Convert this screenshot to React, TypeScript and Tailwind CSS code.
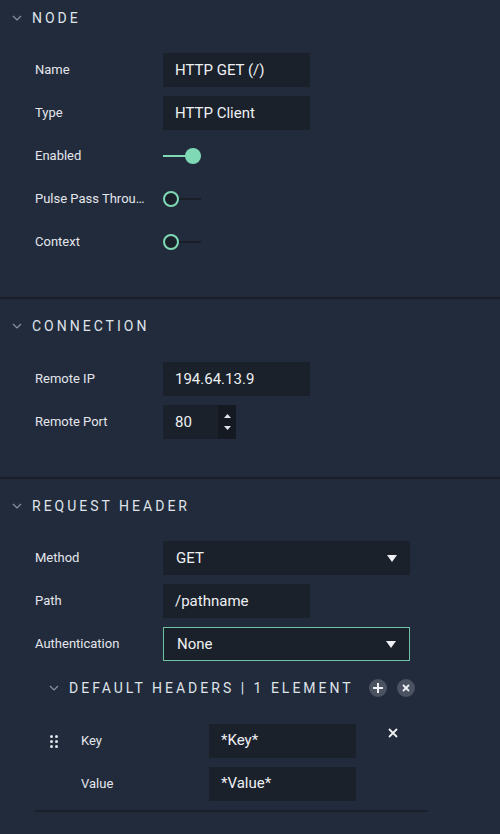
import React from "react";

const FONT = { fontFamily: "Roboto, 'Noto Sans', sans-serif" };

const Chevron = ({ className = "" }: { className?: string }) => (
  <svg width="10" height="6" viewBox="0 0 10 6" className={className}>
    <path d="M1 1l4 4 4-4" fill="none" stroke="#8a93a3" strokeWidth="1.2" />
  </svg>
);

const SectionTitle = ({ title }: { title: string }) => (
  <div className="flex items-center h-[34px] pl-[12px]">
    <Chevron />
    <span className="ml-[10px] text-[14px] tracking-[3px] text-[#dfe3ea]">{title}</span>
  </div>
);

const Row = ({ label, children }: { label: string; children: React.ReactNode }) => (
  <div className="flex items-center h-[34px]">
    <div className="w-[163px] pl-[35px] pr-[17px] text-[13px] text-[#e3e6ec] truncate shrink-0">{label}</div>
    {children}
  </div>
);

const TextBox = ({ value, w = "w-[147px]" }: { value: string; w?: string }) => (
  <div className={`${w} h-[34px] bg-[#1b212b] flex items-center px-[12px] text-[15px] text-[#eef0f3]`}>{value}</div>
);

const Toggle = ({ on }: { on: boolean }) => (
  <div className="relative w-[38px] h-[18px] flex items-center">
    <div className={`w-full h-[2px] ${on ? "bg-[#7fd9b4]" : "bg-[#191e27]"}`} />
    {on ? (
      <div className="absolute right-0 w-[16px] h-[16px] rounded-full bg-[#7fd9b4]" />
    ) : (
      <div className="absolute left-0 w-[16px] h-[16px] rounded-full border-2 border-[#7fd9b4] bg-[#1b212b]" />
    )}
  </div>
);

const Select = ({ value, active }: { value: string; active?: boolean }) => (
  <div
    className={`w-[247px] h-[34px] bg-[#1b212b] flex items-center justify-between pl-[13px] pr-[13px] text-[15px] text-[#eef0f3] ${
      active ? "border border-[#6fc3a4]" : ""
    }`}
  >
    <span>{value}</span>
    <svg width="10" height="7" viewBox="0 0 10 7">
      <path d="M0 0h10L5 7z" fill="#eef0f3" />
    </svg>
  </div>
);

const Divider = () => <div className="h-[2px] bg-[#1a1f29]" />;

export default function App() {
  return (
    <div style={FONT} className="w-[500px] h-[834px] bg-[#222b3b] overflow-hidden">
      <div className="pt-[1px]">
        <SectionTitle title="NODE" />
        <div className="mt-[18px] flex flex-col gap-[9px]">
          <Row label="Name">
            <TextBox value="HTTP GET (/)" />
          </Row>
          <Row label="Type">
            <TextBox value="HTTP Client" />
          </Row>
          <Row label="Enabled">
            <Toggle on />
          </Row>
          <Row label="Pulse Pass Through">
            <Toggle on={false} />
          </Row>
          <Row label="Context">
            <Toggle on={false} />
          </Row>
        </div>
        <div className="h-[38px]" />
        <Divider />
      </div>

      <div className="pt-[10px]">
        <SectionTitle title="CONNECTION" />
        <div className="mt-[19px] flex flex-col gap-[9px]">
          <Row label="Remote IP">
            <TextBox value="194.64.13.9" />
          </Row>
          <Row label="Remote Port">
            <div className="flex h-[34px] w-[73px] bg-[#1b212b]">
              <div className="flex-1 flex items-center px-[12px] text-[15px] text-[#eef0f3]">80</div>
              <div className="w-[18px] bg-[#151a22] flex flex-col items-center justify-center gap-[8px]">
                <svg width="7" height="4" viewBox="0 0 7 4">
                  <path d="M0 4L3.5 0 7 4z" fill="#dfe3ea" />
                </svg>
                <svg width="7" height="4" viewBox="0 0 7 4">
                  <path d="M0 0h7L3.5 4z" fill="#dfe3ea" />
                </svg>
              </div>
            </div>
          </Row>
        </div>
        <div className="h-[38px]" />
        <Divider />
      </div>

      <div className="pt-[10px]">
        <SectionTitle title="REQUEST HEADER" />
        <div className="mt-[18px] flex flex-col gap-[9px]">
          <Row label="Method">
            <Select value="GET" />
          </Row>
          <Row label="Path">
            <TextBox value="/pathname" />
          </Row>
          <Row label="Authentication">
            <Select value="None" active />
          </Row>
        </div>

        <div className="mt-[10px] flex items-center h-[34px] pl-[49px]">
          <Chevron />
          <span className="ml-[10px] text-[14px] tracking-[3px] text-[#dfe3ea]">DEFAULT HEADERS | 1 ELEMENT</span>
          <div className="ml-[15px] flex gap-[10px]">
            <div className="w-[18px] h-[18px] rounded-full bg-[#4b5363] flex items-center justify-center">
              <svg width="10" height="10" viewBox="0 0 10 10">
                <path d="M5 0v10M0 5h10" stroke="#eef0f3" strokeWidth="2" />
              </svg>
            </div>
            <div className="w-[18px] h-[18px] rounded-full bg-[#4b5363] flex items-center justify-center">
              <svg width="8" height="8" viewBox="0 0 8 8">
                <path d="M1 1l6 6M7 1L1 7" stroke="#eef0f3" strokeWidth="1.8" />
              </svg>
            </div>
          </div>
        </div>

        <div className="mx-[35px] mt-[19px] w-[393px] pb-[10px] border-b-2 border-[#1a1f29]">
          <div className="flex">
            <div className="w-[46px] pl-[15px] pt-[11px]">
              <div className="grid grid-cols-2 gap-x-[2px] gap-y-[2px] w-[8px]">
                {[0, 1, 2, 3, 4, 5].map((i) => (
                  <div key={i} className="w-[3px] h-[3px] rounded-full bg-[#dfe3ea]" />
                ))}
              </div>
            </div>
            <div className="flex flex-col gap-[10px]">
              <div className="flex items-center h-[33px]">
                <div className="w-[128px] text-[13px] text-[#e3e6ec]">Key</div>
                <TextBox value="*Key*" />
              </div>
              <div className="flex items-center h-[33px]">
                <div className="w-[128px] text-[13px] text-[#e3e6ec]">Value</div>
                <TextBox value="*Value*" />
              </div>
            </div>
            <div className="ml-[32px] pt-[4px]">
              <svg width="10" height="10" viewBox="0 0 10 10">
                <path d="M1 1l8 8M9 1L1 9" stroke="#eef0f3" strokeWidth="1.8" />
              </svg>
            </div>
          </div>
        </div>
      </div>
    </div>
  );
}
